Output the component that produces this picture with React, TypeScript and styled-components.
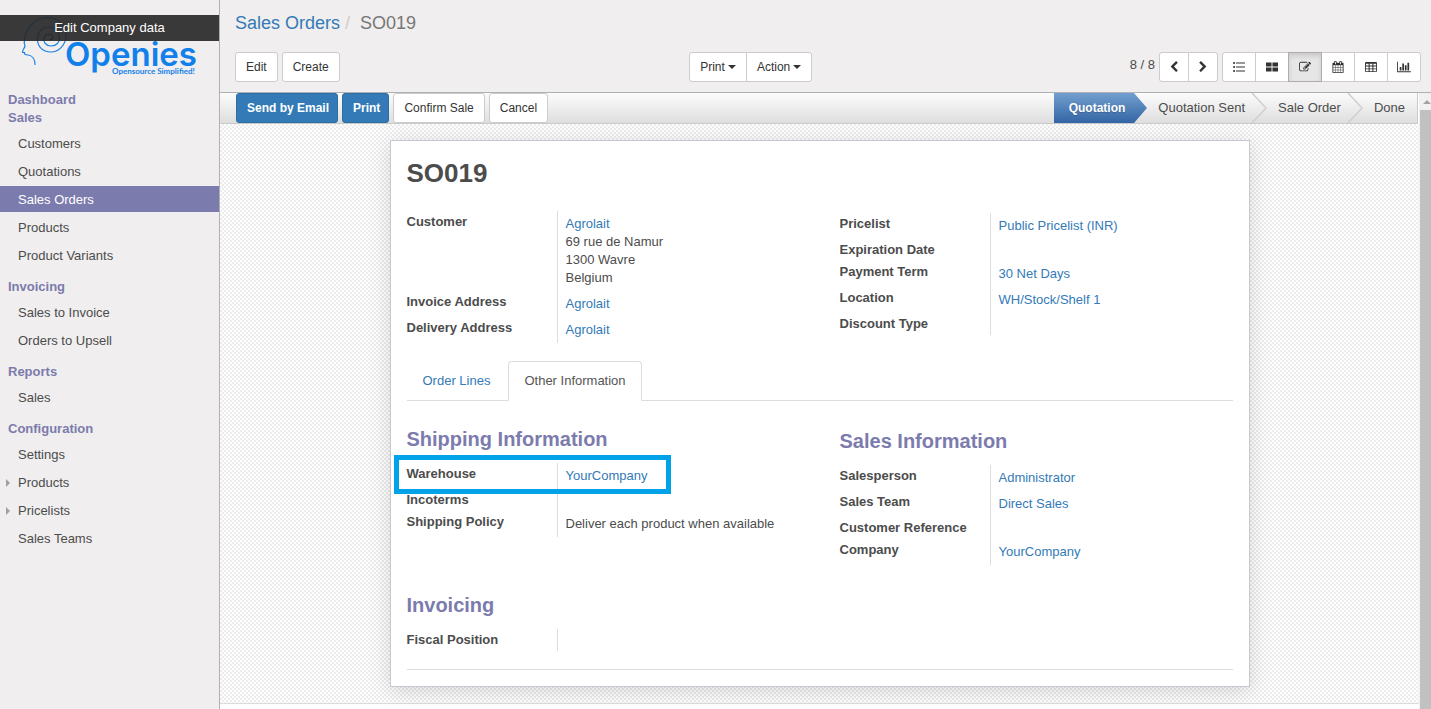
import React from "react";
import styled, { createGlobalStyle, css } from "styled-components";

const GlobalStyle = createGlobalStyle`
  *, *::before, *::after { box-sizing: border-box; }
  body {
    margin: 0;
    font-family: "Liberation Sans", Arial, sans-serif;
    font-size: 13px;
    line-height: 18px;
    color: #4c4c4c;
    background: #fff;
  }
  button { font: inherit; cursor: pointer; }
  a { color: #337ab7; text-decoration: none; }
  ul, ol, dl, dd, h1, h2, h3 { margin: 0; padding: 0; }
  ul, ol { list-style: none; }
`;

const Page = styled.div`
  display: flex;
  min-height: 100vh;
`;

/* ---------- sidebar ---------- */

const Sidebar = styled.nav`
  flex: 0 0 220px;
  background: #f0eeee;
  border-right: 1px solid #afafb6;
`;

const LogoArea = styled.div`
  position: relative;
  height: 91px;
  svg { display: block; }
`;

const EditCompany = styled.a`
  position: absolute;
  top: 15px;
  left: 0;
  right: 0;
  padding: 4px 0;
  background: rgba(37, 37, 37, 0.9);
  color: #fff;
  text-align: center;
`;

const SectionTitle = styled.h3`
  padding: 0 8px;
  font-size: 13px;
  line-height: 18px;
  color: #7c7bad;
`;

const SectionMenu = styled.ul`
  display: flex;
  flex-direction: column;
  gap: 2px;
  padding: 3px 0 10px;
`;

const MenuLink = styled.a<{ $active?: boolean }>`
  display: flex;
  align-items: center;
  height: 26px;
  padding: 2px 0 0 6px;
  color: ${(p) => (p.$active ? "#fff" : "#4c4c4c")};
  background: ${(p) => (p.$active ? "#7c7bad" : "transparent")};
`;

const Toggle = styled.span<{ $visible?: boolean }>`
  width: 4px;
  height: 8px;
  margin-right: 8px;
  border: solid transparent;
  border-width: 4px 0 4px 4px;
  border-left-color: ${(p) => (p.$visible ? "#a0a0a0" : "transparent")};
`;

/* ---------- control panel ---------- */

const Main = styled.main`
  flex: 1;
  min-width: 0;
  display: flex;
  flex-direction: column;
`;

const ControlPanel = styled.header`
  padding: 13px 10px 10px 15px;
  background: #f0eeee;
  border-bottom: 1px solid #afafb6;
`;

const Breadcrumb = styled.ol`
  display: flex;
  height: 20px;
  margin-bottom: 19px;
  font-size: 18px;
  line-height: 20px;
  color: #777;
`;

const Divider = styled.span`
  padding: 0 10px 0 5px;
  color: #ccc;
`;

const Tools = styled.div`
  display: grid;
  grid-template-columns: 18fr 29fr;
`;

const Cluster = styled.div<{ $spread?: boolean }>`
  display: flex;
  gap: 4px;
  justify-content: ${(p) => (p.$spread ? "space-between" : "flex-start")};
`;

const Button = styled.button<{ $primary?: boolean }>`
  display: inline-flex;
  align-items: center;
  height: 30px;
  padding: 0 10px;
  border: 1px solid #ccc;
  border-radius: 3px;
  background: #fff;
  color: #333;
  font-size: 12px;
  white-space: nowrap;
  ${(p) =>
    p.$primary &&
    css`
      padding-right: 8px;
      background: #337ab7;
      border-color: #2e6da4;
      color: #fff;
      font-weight: bold;
    `}
`;

const Caret = styled.span`
  margin-left: 3px;
  border: solid transparent;
  border-width: 4px 4px 0;
  border-top-color: #333;
`;

const ButtonGroup = styled.div`
  display: flex;
  ${Button} { border-radius: 0; }
  ${Button} + ${Button} { margin-left: -1px; }
  ${Button}:first-child { border-radius: 3px 0 0 3px; }
  ${Button}:last-child { border-radius: 0 3px 3px 0; }
`;

const IconButton = styled(Button)<{ $narrow?: boolean; $active?: boolean }>`
  justify-content: center;
  width: ${(p) => (p.$narrow ? 30 : 34)}px;
  padding: 0;
  ${(p) =>
    p.$active &&
    css`
      background: #e6e6e6;
      border-color: #adadad;
      box-shadow: inset 0 3px 5px rgba(0, 0, 0, 0.125);
      z-index: 1;
    `}
`;

const PagerText = styled.span`
  line-height: 26px;
`;

/* ---------- form view ---------- */

const Viewport = styled.div`
  flex: 1;
  display: flex;
`;

const View = styled.div`
  flex: 1;
  min-width: 0;
`;

const StatusBar = styled.div`
  display: flex;
  justify-content: space-between;
  height: 31px;
  margin-right: 1px;
  padding-left: 16px;
  border-bottom: 1px solid #cacaca;
  border-right: 1px solid #cacaca;
  background: linear-gradient(to bottom, #fcfcfc, #dedede);
`;

const Steps = styled.ol`
  display: flex;
`;

const Step = styled.li<{ $current?: boolean }>`
  display: flex;
  line-height: 30px;
  ${(p) =>
    p.$current &&
    css`
      color: #fff;
      font-size: 12px;
      font-weight: bold;
      text-shadow: 0 1px 1px rgba(0, 0, 0, 0.2);
    `}
  svg { display: block; }
`;

const StepLabel = styled.span<{ $current?: boolean; $last?: boolean }>`
  padding: ${(p) => (p.$current ? "0 9px 0 15px" : p.$last ? "0 12px 0 11px" : "0 6px 0 11px")};
  background: ${(p) => (p.$current ? "linear-gradient(to bottom, #729fcf, #3465a4)" : "none")};
`;

const SheetBackdrop = styled.div`
  padding: 16px;
  border-bottom: 1px solid #ddd;
  background: repeating-conic-gradient(#ececec 0 25%, #fff 0 50%) 0 0 / 4px 4px;
`;

const Sheet = styled.article`
  position: relative;
  max-width: 860px;
  margin: 0 auto;
  padding: 16px;
  background: #fff;
  border: 1px solid #c8c8d3;
  box-shadow: 0 4px 20px rgba(0, 0, 0, 0.15);
`;

const Title = styled.h1`
  margin-bottom: 22px;
  font-size: 26px;
  line-height: 32px;
`;

const Columns = styled.div`
  display: grid;
  grid-template-columns: 1fr 1fr;
  column-gap: 40px;
  align-items: start;
`;

const Column = styled.section<{ $lowered?: boolean }>`
  padding-top: ${(p) => (p.$lowered ? 2 : 0)}px;
`;

const Row = styled.div`
  display: grid;
  grid-template-columns: 150px 1fr;
  min-height: 22px;
`;

const Label = styled.dt`
  padding: 2px 0;
  font-weight: bold;
`;

const Value = styled.dd`
  border-left: 1px solid #ddd;
  padding-left: 8px;
  &:not(:empty) { padding-top: 4px; padding-bottom: 4px; }
`;

const AddressLine = styled.span`
  display: block;
`;

const Heading = styled.h2`
  margin-bottom: 12px;
  font-size: 20px;
  line-height: 24px;
  color: #7c7bad;
`;

const Tabs = styled.div`
  display: flex;
  gap: 2px;
  height: 40px;
  margin: 18px 0 26px;
  border-bottom: 1px solid #ddd;
`;

const Tab = styled.button<{ $active?: boolean }>`
  height: 40px;
  padding: 0 15px;
  border: 1px solid transparent;
  border-radius: 4px 4px 0 0;
  background: none;
  color: #337ab7;
  ${(p) =>
    p.$active &&
    css`
      background: #fff;
      border-color: #ddd #ddd #fff;
      color: #555;
    `}
`;

const Invoicing = styled.section`
  margin-top: 28px;
  padding-bottom: 18px;
  border-bottom: 1px solid #ddd;
`;

const Highlighted = styled.div`
  position: relative;
  &::after {
    content: "";
    position: absolute;
    top: -8px;
    left: -13px;
    width: 277px;
    height: 39px;
    border: 5px solid #00a2e8;
    pointer-events: none;
  }
`;

const ScrollTrack = styled.div`
  flex: 0 0 11px;
  padding: 7px 0 0 1px;
  background: #f1f1f1;
`;

const ScrollArrow = styled.div`
  width: 8px;
  margin: 0 0 6px 3px;
  border: solid transparent;
  border-width: 0 4px 4px;
  border-bottom-color: #a3a3a3;
`;

const ScrollThumb = styled.div`
  height: calc(100% - 10px);
  background: #c1c1c1;
`;

/* ---------- icons ---------- */

const Icon = ({ d, width = 1792, title }: { d: string; width?: number; title: string }) => (
  <svg width={Math.round((width * 12) / 1792)} height="12" viewBox={`0 0 ${width} 1792`} fill="#333" role="img" aria-label={title}>
    <path fillRule="evenodd" d={d} />
  </svg>
);

const cell = (x: number, y: number, w: number, h: number) => `M${x} ${y}h${w}v${h}h${-w}z`;

const paths = {
  prev: "M1427 301l-531 531 531 531q19 19 19 45t-19 45l-166 166q-19 19-45 19t-45-19l-742-742q-19-19-19-45t19-45l742-742q19-19 45-19t45 19l166 166q19 19 19 45t-19 45z",
  next: "M1363 877l-742 742q-19 19-45 19t-45-19l-166-166q-19-19-19-45t19-45l531-531-531-531q-19-19-19-45t19-45l166-166q19-19 45-19t45 19l742 742q19 19 19 45t-19 45z",
  list: [299, 896, 1493]
    .map((y) => `M0 ${y}a160 160 0 1 0 320 0a160 160 0 1 0 -320 0z` + cell(448, y - 90, 1344, 180))
    .join(""),
  kanban: [cell(0, 224, 830, 600), cell(0, 972, 830, 600), cell(962, 224, 830, 600), cell(962, 972, 830, 600)].join(""),
  form: "M888 1184l116-116-152-152-116 116v56h96v96h56zm440-720q-16-16-33 1l-350 350q-17 17-1 33t33-1l350-350q17-17 1-33zm80 594v190q0 119-84.5 203.5t-203.5 84.5h-832q-119 0-203.5-84.5t-84.5-203.5v-832q0-119 84.5-203.5t203.5-84.5h832q63 0 117 25 15 7 18 23 3 17-9 29l-49 49q-14 14-32 8-23-6-45-6h-832q-66 0-113 47t-47 113v832q0 66 47 113t113 47h832q66 0 113-47t47-113v-126q0-13 9-22l64-64q15-15 35-7t20 29zm-96-738l288 288-672 672h-288v-288zm444 132l-92 92-288-288 92-92q28-28 68-28t68 28l152 152q28 28 28 68t-28 68z",
  calendar:
    "M192 1664h288v-288h-288v288zm352 0h320v-288h-320v288zm-352-352h288v-320h-288v320zm352 0h320v-320h-320v320zm-352-384h288v-288h-288v288zm736 736h320v-288h-320v288zm-384-736h320v-288h-320v288zm768 736h288v-288h-288v288zm-384-352h320v-320h-320v320zm-352-864v-288q0-13-9.5-22.5t-22.5-9.5h-64q-13 0-22.5 9.5t-9.5 22.5v288q0 13 9.5 22.5t22.5 9.5h64q13 0 22.5-9.5t9.5-22.5zm736 864h288v-320h-288v320zm-384-384h320v-288h-320v288zm384 0h288v-288h-288v288zm32-480v-288q0-13-9.5-22.5t-22.5-9.5h-64q-13 0-22.5 9.5t-9.5 22.5v288q0 13 9.5 22.5t22.5 9.5h64q13 0 22.5-9.5t9.5-22.5zm384-64v1280q0 52-38 90t-90 38h-1408q-52 0-90-38t-38-90v-1280q0-52 38-90t90-38h128v-96q0-66 47-113t113-47h64q66 0 113 47t47 113v96h384v-96q0-66 47-113t113-47h64q66 0 113 47t47 113v96h128q52 0 90 38t38 90z",
  table:
    "M160 149h1472q160 0 160 160v1174q0 160-160 160h-1472q-160 0-160-160v-1174q0-160 160-160z" +
    [398, 822, 1246].map((y) => [130, 692, 1254].map((x) => cell(x, y, 408, 284)).join("")).join(""),
  graph:
    "M640 896v512h-256v-512h256zm384-512v1024h-256v-1024h256zm1024 1152v128h-2048v-1536h128v1408h1920zm-640-896v768h-256v-768h256zm384-384v1152h-256v-1152h256z",
};

const Logo = () => (
  <svg width="219" height="90" viewBox="0 0 219 90" role="img" aria-label="Openies, Opensource Simplified!">
    <g fill="none" stroke="#1a80e6" strokeWidth="1.2" strokeLinecap="round" strokeLinejoin="round">
      <path d="M35 64.5C35 59 32 55.500 28 55C25 55 24 54 24.500 52.500L22.500 52.500C22 51 24.500 48 25 46C24 44 24 42 24.500 40C26 28 34 18 48 17.500C60 17.500 67 28 66 37C65 46 58 52 51 52C42 52 37.500 46 37.500 39C37.500 31 43 27 49 27C55 27 59.500 32 59.500 37C59.500 43 56 46 51 46C46 46 43 42 44 38C45 34 51 33 52.500 36C53 38 52 40 50 39.500" />
    </g>
    <text x="65" y="66" fontFamily="Inter, sans-serif" fontWeight="600" fontSize="33" fill="#1280ea">Openies</text>
    <text x="112" y="74" fontFamily="Lato, sans-serif" fontWeight="700" fontSize="8" fill="#1280ea">Opensource Simplified!</text>
  </svg>
);

const StepArrow = ({ current }: { current?: boolean }) =>
  current ? (
    <svg width="13" height="30" viewBox="0 0 13 30" aria-hidden="true">
      <defs>
        <linearGradient id="step" x1="0" y1="0" x2="0" y2="1">
          <stop offset="0" stopColor="#729fcf" />
          <stop offset="1" stopColor="#3465a4" />
        </linearGradient>
      </defs>
      <path d="M0 0L13 15L0 30Z" fill="url(#step)" />
    </svg>
  ) : (
    <svg width="16" height="30" viewBox="0 0 16 30" fill="none" aria-hidden="true">
      <path d="M1 0L15 15L1 30" stroke="#cfcfcf" strokeWidth="1.5" />
    </svg>
  );

/* ---------- data ---------- */

type MenuItem = { name: string; active?: boolean; children?: boolean };

const menu: { title: string; items: MenuItem[] }[] = [
  {
    title: "Sales",
    items: [
      { name: "Customers" },
      { name: "Quotations" },
      { name: "Sales Orders", active: true },
      { name: "Products" },
      { name: "Product Variants" },
    ],
  },
  { title: "Invoicing", items: [{ name: "Sales to Invoice" }, { name: "Orders to Upsell" }] },
  { title: "Reports", items: [{ name: "Sales" }] },
  {
    title: "Configuration",
    items: [
      { name: "Settings" },
      { name: "Products", children: true },
      { name: "Pricelists", children: true },
      { name: "Sales Teams" },
    ],
  },
];

const views = [
  { title: "List", d: paths.list },
  { title: "Kanban", d: paths.kanban },
  { title: "Form", d: paths.form, active: true },
  { title: "Calendar", d: paths.calendar },
  { title: "Pivot", d: paths.table },
  { title: "Graph", d: paths.graph, width: 2048 },
];

const steps = ["Quotation", "Quotation Sent", "Sale Order", "Done"];

const Field = ({ label, link, children }: { label: string; link?: string; children?: React.ReactNode }) => (
  <Row>
    <Label>{label}</Label>
    <Value>
      {link && <a href="#">{link}</a>}
      {children}
    </Value>
  </Row>
);

export default function App() {
  return (
    <>
      <GlobalStyle />
      <Page>
        <Sidebar>
          <LogoArea>
            <Logo />
            <EditCompany href="#">Edit Company data</EditCompany>
          </LogoArea>
          <SectionTitle>Dashboard</SectionTitle>
          {menu.map((section) => (
            <React.Fragment key={section.title}>
              <SectionTitle>{section.title}</SectionTitle>
              <SectionMenu>
                {section.items.map((item) => (
                  <li key={item.name}>
                    <MenuLink href="#" $active={item.active}>
                      <Toggle $visible={item.children} />
                      {item.name}
                    </MenuLink>
                  </li>
                ))}
              </SectionMenu>
            </React.Fragment>
          ))}
        </Sidebar>

        <Main>
          <ControlPanel>
            <Breadcrumb>
              <li>
                <a href="#">Sales Orders</a>
                <Divider>/</Divider>
              </li>
              <li>SO019</li>
            </Breadcrumb>
            <Tools>
              <Cluster>
                <Button>Edit</Button>
                <Button>Create</Button>
              </Cluster>
              <Cluster $spread>
                <ButtonGroup>
                  <Button>Print<Caret /></Button>
                  <Button>Action<Caret /></Button>
                </ButtonGroup>
                <Cluster>
                  <PagerText>8 / 8</PagerText>
                  <ButtonGroup>
                    <IconButton $narrow><Icon title="Previous" d={paths.prev} /></IconButton>
                    <IconButton $narrow><Icon title="Next" d={paths.next} /></IconButton>
                  </ButtonGroup>
                  <ButtonGroup>
                    {views.map((v) => (
                      <IconButton key={v.title} $active={v.active}>
                        <Icon title={v.title} d={v.d} width={v.width} />
                      </IconButton>
                    ))}
                  </ButtonGroup>
                </Cluster>
              </Cluster>
            </Tools>
          </ControlPanel>

          <Viewport>
            <View>
              <StatusBar>
                <Cluster>
                  <Button $primary>Send by Email</Button>
                  <Button $primary>Print</Button>
                  <Button>Confirm Sale</Button>
                  <Button>Cancel</Button>
                </Cluster>
                <Steps>
                  {steps.map((name, i) => (
                    <Step key={name} $current={i === 0}>
                      <StepLabel $current={i === 0} $last={i === steps.length - 1}>{name}</StepLabel>
                      {i < steps.length - 1 && <StepArrow current={i === 0} />}
                    </Step>
                  ))}
                </Steps>
              </StatusBar>

              <SheetBackdrop>
                <Sheet>
                  <Title>SO019</Title>
                  <Columns>
                    <Column as="dl">
                      <Field label="Customer" link="Agrolait">
                        <AddressLine>69 rue de Namur</AddressLine>
                        <AddressLine>1300 Wavre</AddressLine>
                        <AddressLine>Belgium</AddressLine>
                      </Field>
                      <Field label="Invoice Address" link="Agrolait" />
                      <Field label="Delivery Address" link="Agrolait" />
                    </Column>
                    <Column as="dl" $lowered>
                      <Field label="Pricelist" link="Public Pricelist (INR)" />
                      <Field label="Expiration Date" />
                      <Field label="Payment Term" link="30 Net Days" />
                      <Field label="Location" link="WH/Stock/Shelf 1" />
                      <Field label="Discount Type" />
                    </Column>
                  </Columns>

                  <Tabs role="tablist">
                    <Tab role="tab" aria-selected={false}>Order Lines</Tab>
                    <Tab role="tab" aria-selected $active>Other Information</Tab>
                  </Tabs>

                  <Columns>
                    <Column>
                      <Heading>Shipping Information</Heading>
                      <dl>
                        <Highlighted>
                          <Field label="Warehouse" link="YourCompany" />
                        </Highlighted>
                        <Field label="Incoterms" />
                        <Field label="Shipping Policy">Deliver each product when available</Field>
                      </dl>
                    </Column>
                    <Column $lowered>
                      <Heading>Sales Information</Heading>
                      <dl>
                        <Field label="Salesperson" link="Administrator" />
                        <Field label="Sales Team" link="Direct Sales" />
                        <Field label="Customer Reference" />
                        <Field label="Company" link="YourCompany" />
                      </dl>
                    </Column>
                  </Columns>

                  <Invoicing>
                    <Heading>Invoicing</Heading>
                    <dl>
                      <Field label="Fiscal Position" />
                    </dl>
                  </Invoicing>
                </Sheet>
              </SheetBackdrop>
            </View>
            <ScrollTrack aria-hidden="true">
              <ScrollArrow />
              <ScrollThumb />
            </ScrollTrack>
          </Viewport>
        </Main>
      </Page>
    </>
  );
}
